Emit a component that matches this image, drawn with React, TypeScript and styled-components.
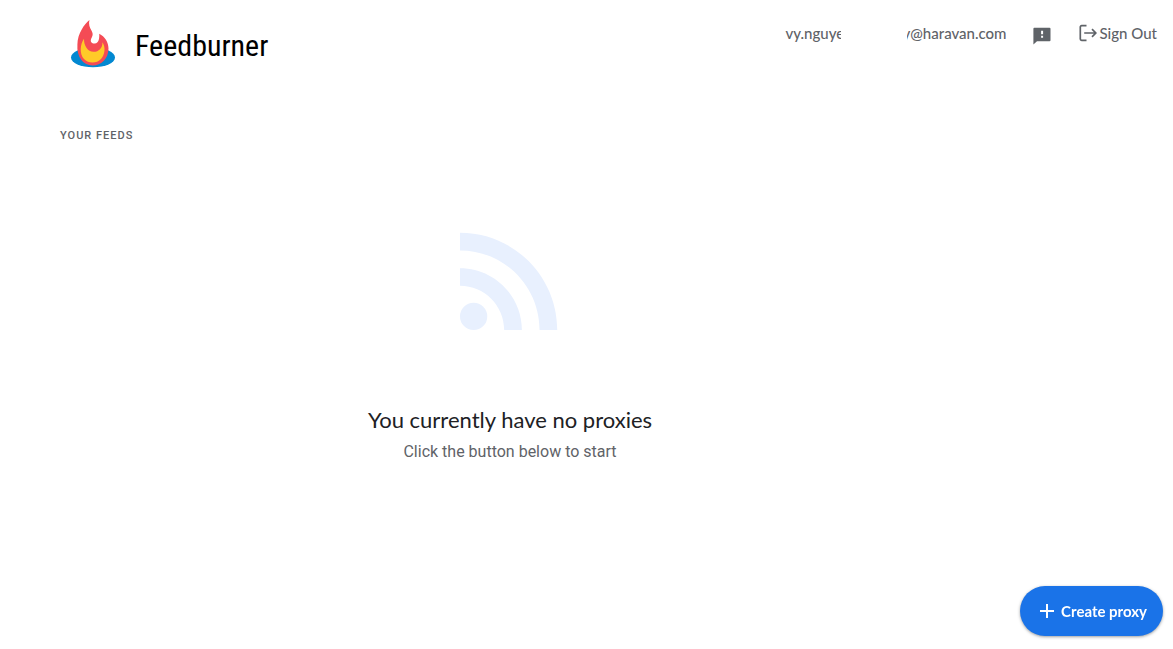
import React from "react";
import styled, { createGlobalStyle } from "styled-components";

const GlobalStyle = createGlobalStyle`
  *, *::before, *::after { box-sizing: border-box; }
  body { margin: 0; background: #fff; color: #5f6368; font-family: Roboto, sans-serif; }
  h1, h2, p { margin: 0; }
`;

const productFont = `Lato, "Open Sans", sans-serif`;

const Page = styled.div`
  min-height: 100vh;
  display: flex;
  flex-direction: column;
`;

const Header = styled.header`
  display: flex;
  justify-content: space-between;
  align-items: flex-start;
  padding: 16px 16px 0 65px;
`;

const Brand = styled.a`
  display: flex;
  align-items: center;
  gap: 14px;
  height: 56px;
  color: #000;
  text-decoration: none;
`;

const BrandName = styled.span`
  padding-top: 4px;
  font-family: "Roboto Condensed", "Liberation Sans Narrow", "Liberation Sans", sans-serif;
  font-size: 30px;
  line-height: 54px;
`;

const Account = styled.div`
  display: flex;
  align-items: center;
  height: 34px;
  font-family: ${productFont};
  font-size: 15px;
  font-weight: 500;
  line-height: 20px;
`;

const Email = styled.div`
  display: flex;
  justify-content: space-between;
  width: 221px;
  margin-right: 26px;
`;

const EmailPart = styled.span<{ $width: number; $end?: boolean }>`
  display: flex;
  justify-content: ${(p) => (p.$end ? "flex-end" : "flex-start")};
  width: ${(p) => p.$width}px;
  overflow: hidden;
  white-space: nowrap;
`;

const BarButton = styled.button`
  display: flex;
  align-items: center;
  gap: 2px;
  padding: 0;
  border: 0;
  background: none;
  color: inherit;
  font: inherit;
  cursor: pointer;
`;

const Actions = styled.div`
  display: flex;
  align-items: center;
  gap: 27px;
`;

const Main = styled.main`
  flex: 1;
  width: 100%;
  max-width: 1020px;
  padding: 56px 60px 0;
`;

const SectionTitle = styled.h2`
  font-size: 11px;
  font-weight: 500;
  line-height: 16px;
  letter-spacing: 1px;
  text-transform: uppercase;
`;

const Empty = styled.section`
  display: flex;
  flex-direction: column;
  align-items: center;
  padding-top: 61px;
  text-align: center;
`;

const EmptyTitle = styled.h1`
  margin-top: 49px;
  color: #202124;
  font-family: ${productFont};
  font-size: 22px;
  font-weight: 400;
  line-height: 32px;
`;

const EmptyText = styled.p`
  font-size: 16px;
  line-height: 32px;
`;

const CreateButton = styled.button`
  position: fixed;
  right: 10px;
  bottom: 13px;
  display: flex;
  align-items: center;
  gap: 2px;
  height: 50px;
  padding: 0 16px 0 15px;
  border: 0;
  border-radius: 25px;
  background: #1a73e8;
  box-shadow: 0 1px 3px rgba(60, 64, 67, 0.5);
  color: #fff;
  font-family: ${productFont};
  font-size: 15px;
  font-weight: 700;
  line-height: 24px;
  cursor: pointer;
`;

const Flame = () => (
  <svg width="56" height="56" viewBox="0 0 56 56" aria-hidden="true">
    <ellipse cx="28" cy="41.5" rx="22" ry="9.8" fill="#0288d1" />
    <path
      d="M24.4 4C19.5 8 12.5 17.5 12.4 28.5C11.4 41 18.5 49.5 27.5 49.5C36.5 49.5 43.5 42.5 43.5 32.5C43.5 26 39.8 20.6 34.2 17.7C34.6 22 33.8 27.4 29.8 27.6C25.2 27.6 25 24.2 27 21C30 15.5 22.4 13 24.4 4Z"
      fill="#f44b55"
    />
    <path
      d="M19 22.7C15 28 14.3 38 19 43C23.5 47.8 31.5 47.8 36 43C40 38.7 40.8 31 37.4 26.2C37.8 32 33.4 36 28.5 35.8C22.6 35.6 18.8 29.5 19 22.7Z"
      fill="#ffca28"
    />
  </svg>
);

const FeedbackIcon = () => (
  <svg width="20" height="24" viewBox="0 0 20 24" fill="currentColor" aria-hidden="true">
    <path d="M2.5 6.8h15a1 1 0 0 1 1 1v11.4a1 1 0 0 1-1 1H5l-3.6 3.2V7.8a1 1 0 0 1 1.1-1Zm6.6 3v3.4h2V9.8h-2Zm0 5v2h2v-2h-2Z" />
  </svg>
);

const SignOutIcon = () => (
  <svg width="18" height="18" viewBox="0 0 18 18" fill="none" stroke="currentColor" strokeWidth="1.7" aria-hidden="true">
    <path d="M7.5 1.6H2.6a1.3 1.3 0 0 0-1.3 1.3v12.2a1.3 1.3 0 0 0 1.3 1.3h4.9M5.2 9h11.6M13 5.2 16.8 9l-3.8 3.8" />
  </svg>
);

const FeedIcon = () => (
  <svg width="150" height="150" viewBox="0 0 24 24" fill="#e8f0fe" aria-hidden="true">
    <circle cx="6.18" cy="17.82" r="2.18" />
    <path d="M4 4.44v2.83c7.03 0 12.73 5.7 12.73 12.73h2.83c0-8.59-6.97-15.56-15.56-15.56zm0 5.66v2.83c3.9 0 7.07 3.17 7.07 7.07h2.83c0-5.47-4.43-9.9-9.9-9.9z" />
  </svg>
);

const PlusIcon = () => (
  <svg width="24" height="24" viewBox="0 0 24 24" fill="none" stroke="currentColor" strokeWidth="2" aria-hidden="true">
    <path d="M12 5v14M5 12h14" />
  </svg>
);

export default function App() {
  return (
    <Page>
      <GlobalStyle />
      <Header>
        <Brand href="#">
          <Flame />
          <BrandName>Feedburner</BrandName>
        </Brand>
        <Account>
          <Email>
            <EmailPart $width={56}>vy.nguye</EmailPart>
            <EmailPart $width={99} $end>y@haravan.com</EmailPart>
          </Email>
          <Actions>
            <BarButton aria-label="Send feedback">
              <FeedbackIcon />
            </BarButton>
            <BarButton>
              <SignOutIcon />
              Sign Out
            </BarButton>
          </Actions>
        </Account>
      </Header>
      <Main>
        <SectionTitle>Your feeds</SectionTitle>
        <Empty>
          <FeedIcon />
          <EmptyTitle>You currently have no proxies</EmptyTitle>
          <EmptyText>Click the button below to start</EmptyText>
        </Empty>
      </Main>
      <CreateButton>
        <PlusIcon />
        Create proxy
      </CreateButton>
    </Page>
  );
}
